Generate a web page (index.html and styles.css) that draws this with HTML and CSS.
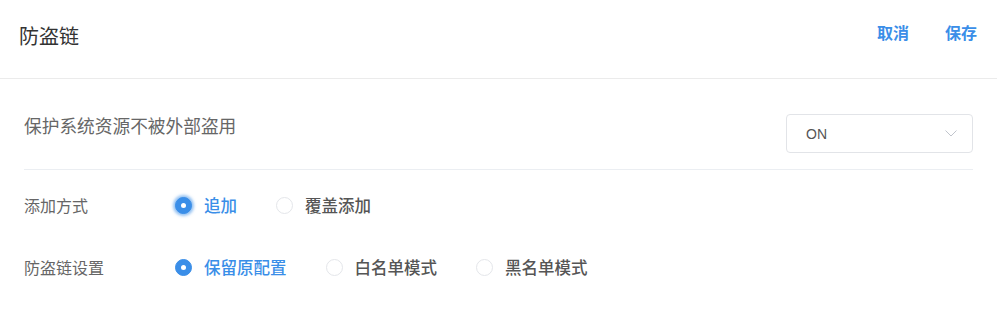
FILE: index.html
```html
<!DOCTYPE html>
<html lang="zh-CN">
<head>
<meta charset="utf-8">
<title>防盗链</title>
<link rel="stylesheet" href="styles.css">
</head>
<body>
<div class="panel">
  <header class="header">
    <h1 class="title">防盗链</h1>
    <div class="actions">
      <a class="action">取消</a>
      <a class="action">保存</a>
    </div>
  </header>
  <section class="content">
    <div class="switch-row">
      <div class="switch-text">保护系统资源不被外部盗用</div>
      <div class="select">
        <span class="select-value">ON</span>
        <svg class="chevron" width="12" height="7" viewBox="0 0 12 7"><path d="M0.5 0.5 L6 6 L11.5 0.5" fill="none" stroke="#c0c4cc" stroke-width="1"/></svg>
      </div>
    </div>
    <div class="form">
      <div class="form-row">
        <div class="form-label">添加方式</div>
        <div class="radio-group">
          <label class="radio checked focus"><span class="radio-circle"></span><span class="radio-label">追加</span></label>
          <label class="radio"><span class="radio-circle"></span><span class="radio-label">覆盖添加</span></label>
        </div>
      </div>
      <div class="form-row">
        <div class="form-label">防盗链设置</div>
        <div class="radio-group">
          <label class="radio checked"><span class="radio-circle"></span><span class="radio-label">保留原配置</span></label>
          <label class="radio"><span class="radio-circle"></span><span class="radio-label">白名单模式</span></label>
          <label class="radio"><span class="radio-circle"></span><span class="radio-label">黑名单模式</span></label>
        </div>
      </div>
    </div>
  </section>
</div>
</body>
</html>
```
FILE: styles.css
```css
* { box-sizing: border-box; }
html, body { margin: 0; padding: 0; background: #fff; }
body {
  font-family: "Liberation Sans", "Noto Sans CJK SC", sans-serif;
  color: #333;
}
.panel { width: 997px; }
.header {
  height: 79px;
  border-bottom: 1px solid #ebebeb;
  display: flex;
  justify-content: space-between;
  align-items: flex-start;
  padding: 22px 20px 0 19px;
}
.title {
  margin: 1px 0 0;
  font-size: 20px;
  line-height: 28px;
  font-weight: 400;
  color: #333;
}
.actions { display: flex; gap: 36px; }
.action {
  font-size: 16px;
  line-height: 24px;
  font-weight: 600;
  color: #3a8ee8;
  cursor: pointer;
}
.content { padding: 0 24px; }
.switch-row {
  display: flex;
  justify-content: space-between;
  align-items: flex-start;
  padding: 35px 0 16px;
  border-bottom: 1px solid #ebeef2;
}
.switch-text {
  font-size: 17.7px;
  line-height: 26px;
  color: #666;
}
.select {
  width: 187px;
  height: 39px;
  border: 1px solid #e2e4e8;
  border-radius: 4px;
  display: flex;
  align-items: center;
  justify-content: space-between;
  padding: 0 15px 0 19px;
}
.select-value {
  font-size: 14px;
  color: #555;
}
.chevron { display: block; }
.form {
  padding-top: 15px;
  display: flex;
  flex-direction: column;
  gap: 22px;
}
.form-row {
  height: 40px;
  display: flex;
  align-items: center;
}
.form-label {
  width: 150px;
  font-size: 16px;
  color: #666;
}
.radio-group { display: flex; align-items: center; gap: 38px; }
.radio { display: flex; align-items: center; cursor: pointer; }
.radio-circle {
  width: 17px;
  height: 17px;
  border-radius: 50%;
  border: 1px solid #e4e6ea;
  background: #fff;
  display: flex;
  align-items: center;
  justify-content: center;
  margin-left: 1px;
}
.radio.checked .radio-circle {
  background: #3a8ee8;
  border-color: #3a8ee8;
}
.radio.checked .radio-circle::after {
  content: "";
  width: 5px;
  height: 5px;
  border-radius: 50%;
  background: #fff;
}
.radio.focus .radio-circle {
  box-shadow: 0 0 3px 2px rgba(58, 142, 232, 0.55);
}
.radio-label {
  margin-left: 12px;
  font-size: 16.5px;
  font-weight: 500;
  color: #555;
}
.radio.checked .radio-label { color: #3a8ee8; }
```
